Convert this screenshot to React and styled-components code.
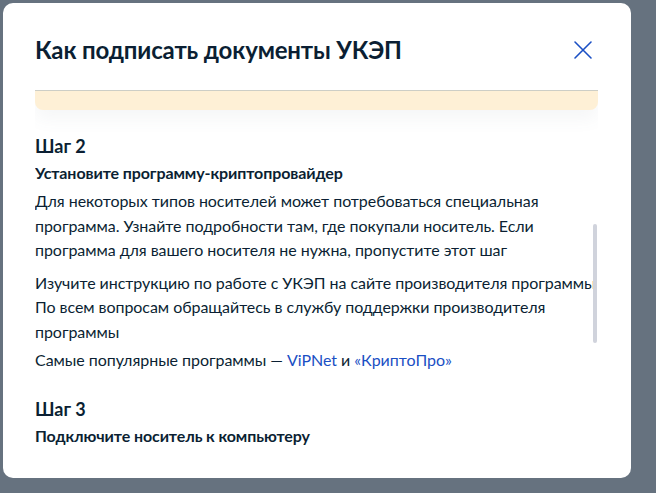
import React from 'react';
import styled, { createGlobalStyle } from 'styled-components';

const GlobalStyle = createGlobalStyle`
  html, body {
    margin: 0;
    padding: 0;
    background: #66727f;
  }
  body {
    font-family: Lato, "Noto Sans", "Liberation Sans", sans-serif;
    color: #0b1f33;
  }
`;

const Page = styled.div`
  width: 656px;
  height: 493px;
  box-sizing: border-box;
  padding: 3px 25px 15px 3px;
  display: flex;
`;

const Modal = styled.div`
  flex: 1;
  background: #ffffff;
  border-radius: 10px;
  padding: 0 33px 0 32px;
  display: flex;
  flex-direction: column;
  overflow: hidden;
`;

const Header = styled.div`
  height: 80px;
  padding-top: 7px;
  display: flex;
  align-items: center;
  justify-content: space-between;
  flex-shrink: 0;
`;

const Title = styled.h2`
  margin: 0;
  font-size: 24px;
  font-weight: 700;
  line-height: 32px;
  letter-spacing: -0.15px;
`;

const CloseButton = styled.button`
  width: 24px;
  height: 24px;
  padding: 0;
  margin-right: 3px;
  border: none;
  background: transparent;
  display: flex;
  align-items: center;
  justify-content: center;
  cursor: pointer;
`;

const ScrollArea = styled.div`
  position: relative;
  flex: 1;
  overflow: hidden;
`;

const NoticeTail = styled.div`
  height: 19px;
  background: #fef0d6;
  border-top: 1px solid #cdcec6;
  border-radius: 0 0 8px 8px;
  box-shadow: 0 8px 18px rgba(102, 114, 127, 0.07);
`;

const Step = styled.section`
  margin-top: ${(p) => p.$gap}px;
`;

const StepTitle = styled.h3`
  margin: 0;
  font-size: 18px;
  font-weight: 700;
  line-height: 24px;
`;

const StepSubtitle = styled.h4`
  margin: 5px 0 0;
  font-size: 16px;
  font-weight: 700;
  line-height: 20px;
  letter-spacing: -0.1px;
`;

const Text = styled.p`
  margin: ${(p) => p.$top}px 0 0;
  font-size: 16px;
  line-height: 24.5px;
  letter-spacing: -0.05px;
  white-space: nowrap;
`;

const Link = styled.a`
  color: #1a4fc4;
  text-decoration: none;
`;

const ScrollThumb = styled.div`
  position: absolute;
  right: 1px;
  top: 134px;
  width: 4px;
  height: 119px;
  border-radius: 2px;
  background: #d0d3dc;
`;

const CloseIcon = () => (
  <svg width="20" height="20" viewBox="0 0 20 20" fill="none">
    <path d="M2 2L18 18M18 2L2 18" stroke="#1a4fc4" strokeWidth="1.6" strokeLinecap="round" />
  </svg>
);

export default function App() {
  return (
    <>
      <GlobalStyle />
      <Page>
        <Modal>
          <Header>
            <Title>Как подписать документы УКЭП</Title>
            <CloseButton aria-label="Закрыть">
              <CloseIcon />
            </CloseButton>
          </Header>
          <ScrollArea>
            <NoticeTail />
            <Step $gap={24}>
              <StepTitle>Шаг 2</StepTitle>
              <StepSubtitle>Установите программу-криптопровайдер</StepSubtitle>
              <Text $top={6}>
                Для некоторых типов носителей может потребоваться специальная
                <br />
                программа. Узнайте подробности там, где покупали носитель. Если
                <br />
                программа для вашего носителя не нужна, пропустите этот шаг
              </Text>
              <Text $top={8}>
                Изучите инструкцию по работе с УКЭП на сайте производителя программы
                <br />
                По всем вопросам обращайтесь в службу поддержки производителя
                <br />
                программы
              </Text>
              <Text $top={4}>
                Самые популярные программы — <Link href="#">ViPNet</Link> и{' '}
                <Link href="#">«КриптоПро»</Link>
              </Text>
            </Step>
            <Step $gap={24}>
              <StepTitle>Шаг 3</StepTitle>
              <StepSubtitle>Подключите носитель к компьютеру</StepSubtitle>
            </Step>
            <ScrollThumb />
          </ScrollArea>
        </Modal>
      </Page>
    </>
  );
}
